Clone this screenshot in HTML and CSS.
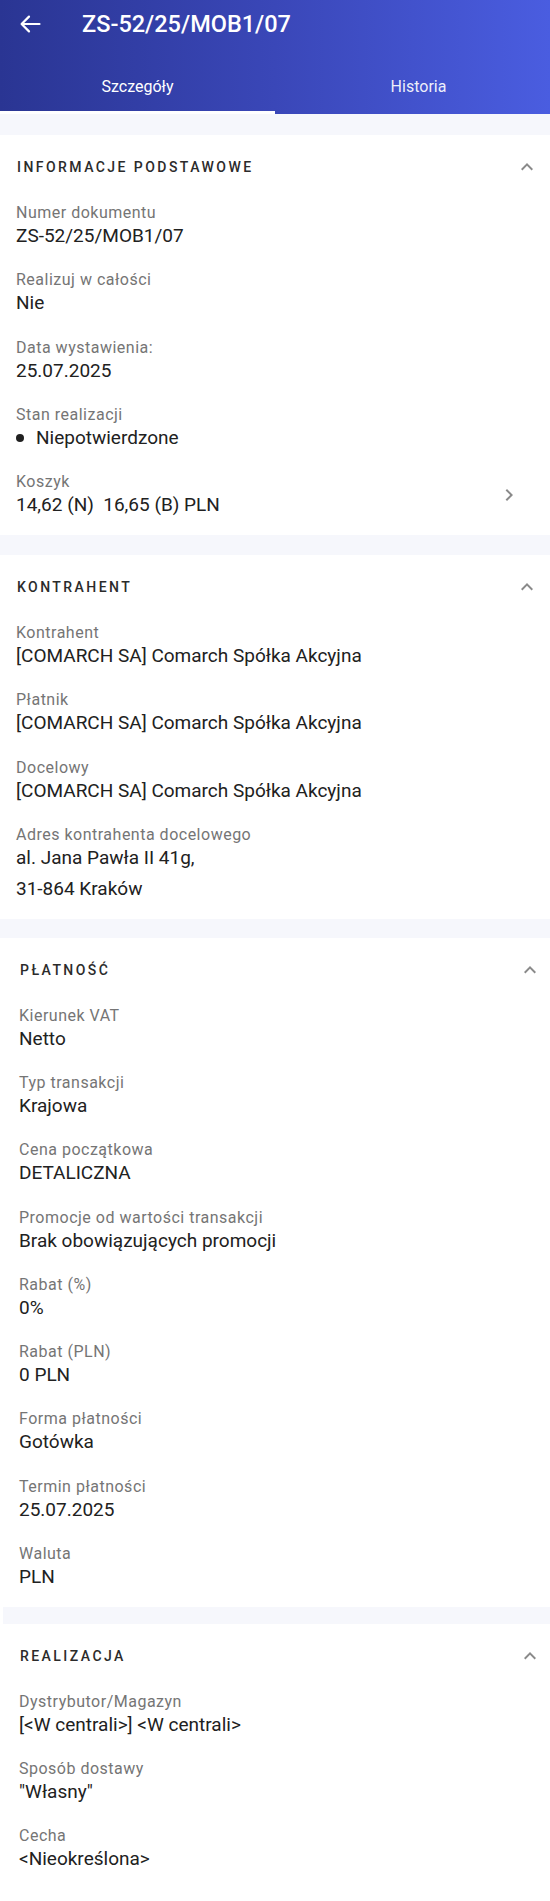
FILE: index.html
```html
<!DOCTYPE html>
<html lang="pl">
<head>
    <meta charset="UTF-8">
    <meta name="viewport" content="width=device-width, initial-scale=1.0">
    <title>ZS-52/25/MOB1/07</title>
    <link rel="stylesheet" href="styles.css">
</head>
<body>

    <header class="top">
        <div class="toolbar">
            <button class="back" aria-label="Wstecz">
                <svg width="24" height="24" viewBox="0 0 24 24">
                    <path d="M21.5 12H4 M11 4.6L3.6 12L11 19.4" fill="none" stroke="#fff" stroke-width="2.2" stroke-linecap="round" stroke-linejoin="round"/>
                </svg>
            </button>
            <h1>ZS-52/25/MOB1/07</h1>
        </div>
        <nav class="tabs">
            <div class="tab active">Szczegóły</div>
            <div class="tab second">Historia</div>
        </nav>
    </header>

    <main>
        <div class="band b1"></div>
        <section class="card">
            <div class="card-head">
                <h2>Informacje podstawowe</h2>
                <svg class="up" width="24" height="24" viewBox="0 0 24 24"><path d="M12 8l-6 6 1.41 1.41L12 10.83l4.59 4.58L18 14z"/></svg>
            </div>
            <div class="rows">
                <div class="row">
                    <div class="label">Numer dokumentu</div>
                    <div class="value">ZS-52/25/MOB1/07</div>
                </div>
                <div class="row">
                    <div class="label">Realizuj w całości</div>
                    <div class="value">Nie</div>
                </div>
                <div class="row">
                    <div class="label">Data wystawienia:</div>
                    <div class="value">25.07.2025</div>
                </div>
                <div class="row">
                    <div class="label">Stan realizacji</div>
                    <div class="value status"><span class="dot"></span>Niepotwierdzone</div>
                </div>
                <div class="row link">
                    <div>
                        <div class="label">Koszyk</div>
                        <div class="value">14,62 (N)&nbsp;&nbsp;16,65 (B) PLN</div>
                    </div>
                    <svg class="next" width="24" height="24" viewBox="0 0 24 24"><path d="M10 6L8.59 7.41 13.17 12l-4.58 4.59L10 18l6-6z"/></svg>
                </div>
            </div>
        </section>

        <div class="band b2"></div>
        <section class="card">
            <div class="card-head">
                <h2>Kontrahent</h2>
                <svg class="up" width="24" height="24" viewBox="0 0 24 24"><path d="M12 8l-6 6 1.41 1.41L12 10.83l4.59 4.58L18 14z"/></svg>
            </div>
            <div class="rows">
                <div class="row">
                    <div class="label">Kontrahent</div>
                    <div class="value">[COMARCH SA] Comarch Spółka Akcyjna</div>
                </div>
                <div class="row">
                    <div class="label">Płatnik</div>
                    <div class="value">[COMARCH SA] Comarch Spółka Akcyjna</div>
                </div>
                <div class="row">
                    <div class="label">Docelowy</div>
                    <div class="value">[COMARCH SA] Comarch Spółka Akcyjna</div>
                </div>
                <div class="row">
                    <div class="label">Adres kontrahenta docelowego</div>
                    <div class="value">al. Jana Pawła II 41g,</div>
                    <div class="value line2">31-864 Kraków</div>
                </div>
            </div>
        </section>

        <div class="band b3"></div>
        <section class="card shifted">
            <div class="card-head">
                <h2>Płatność</h2>
                <svg class="up" width="24" height="24" viewBox="0 0 24 24"><path d="M12 8l-6 6 1.41 1.41L12 10.83l4.59 4.58L18 14z"/></svg>
            </div>
            <div class="rows">
                <div class="row">
                    <div class="label">Kierunek VAT</div>
                    <div class="value">Netto</div>
                </div>
                <div class="row">
                    <div class="label">Typ transakcji</div>
                    <div class="value">Krajowa</div>
                </div>
                <div class="row">
                    <div class="label">Cena początkowa</div>
                    <div class="value">DETALICZNA</div>
                </div>
                <div class="row">
                    <div class="label">Promocje od wartości transakcji</div>
                    <div class="value">Brak obowiązujących promocji</div>
                </div>
                <div class="row">
                    <div class="label">Rabat (%)</div>
                    <div class="value">0%</div>
                </div>
                <div class="row">
                    <div class="label">Rabat (PLN)</div>
                    <div class="value">0 PLN</div>
                </div>
                <div class="row">
                    <div class="label">Forma płatności</div>
                    <div class="value">Gotówka</div>
                </div>
                <div class="row">
                    <div class="label">Termin płatności</div>
                    <div class="value">25.07.2025</div>
                </div>
                <div class="row">
                    <div class="label">Waluta</div>
                    <div class="value">PLN</div>
                </div>
            </div>
        </section>

        <div class="band b4"></div>
        <section class="card shifted">
            <div class="card-head">
                <h2>Realizacja</h2>
                <svg class="up" width="24" height="24" viewBox="0 0 24 24"><path d="M12 8l-6 6 1.41 1.41L12 10.83l4.59 4.58L18 14z"/></svg>
            </div>
            <div class="rows">
                <div class="row">
                    <div class="label">Dystrybutor/Magazyn</div>
                    <div class="value">[&lt;W centrali&gt;] &lt;W centrali&gt;</div>
                </div>
                <div class="row">
                    <div class="label">Sposób dostawy</div>
                    <div class="value">"Własny"</div>
                </div>
                <div class="row">
                    <div class="label">Cecha</div>
                    <div class="value">&lt;Nieokreślona&gt;</div>
                </div>
            </div>
        </section>
    </main>

</body>
</html>
```

FILE: styles.css
```css
*{
    margin: 0;
    padding: 0;
    box-sizing: border-box;
}
body{
    font-family: Roboto, "Noto Sans", sans-serif;
    background-color: #fff;
    color: #212121;
}

/* header */
.top{
    background: linear-gradient(90deg, #2a3593 0%, #3a47b8 50%, #4a5de0 100%);
    color: #fff;
}
.toolbar{
    height: 48px;
    display: flex;
    align-items: center;
    padding-left: 18px;
}
.back{
    width: 24px;
    height: 24px;
    border: none;
    background: none;
    display: flex;
}
.toolbar h1{
    margin-left: 40px;
    font-size: 23.5px;
    font-weight: 500;
}
.tabs{
    display: grid;
    grid-template-columns: 1fr 1fr;
    height: 66px;
}
.tab{
    display: flex;
    align-items: center;
    justify-content: center;
    padding-top: 13px;
    font-size: 16px;
    color: rgba(255, 255, 255, 0.92);
    border-bottom: 3px solid transparent;
}
.tab.second{
    padding-left: 12px;
}
.tab.active{
    color: #fff;
    border-bottom-color: #fff;
}

/* sections */
.band{
    height: 20px;
    background-color: #f6f7fc;
}
.b1{ height: 21px; }
.b3{ height: 19px; }
.b4{
    height: 17px;
    margin-left: 3px;
}
.card{
    padding: 21px 11px 17px 16px;
}
.card.shifted{
    padding-left: 19px;
    padding-right: 8px;
}
.card-head{
    height: 22px;
    display: flex;
    justify-content: space-between;
    align-items: center;
}
.card-head h2{
    font-size: 14px;
    font-weight: 500;
    letter-spacing: 2.45px;
    text-transform: uppercase;
    color: #2b2b2b;
    padding-left: 1px;
}
.up{
    fill: #8a8a8a;
}
.rows{
    display: flex;
    flex-direction: column;
    gap: 21.25px;
    margin-top: 25px;
}
.label{
    font-size: 16px;
    line-height: 20px;
    color: #757575;
    letter-spacing: 0.5px;
}
.value{
    font-size: 19px;
    line-height: 26px;
    color: #212121;
}
.value.line2{
    margin-top: 5px;
}
.status{
    display: flex;
    align-items: center;
}
.dot{
    width: 8px;
    height: 8px;
    border-radius: 50%;
    background-color: #212121;
    margin-right: 12px;
}
.row.link{
    display: flex;
    justify-content: space-between;
    align-items: center;
}
.next{
    fill: #8a8a8a;
    margin-right: 18px;
}
```
